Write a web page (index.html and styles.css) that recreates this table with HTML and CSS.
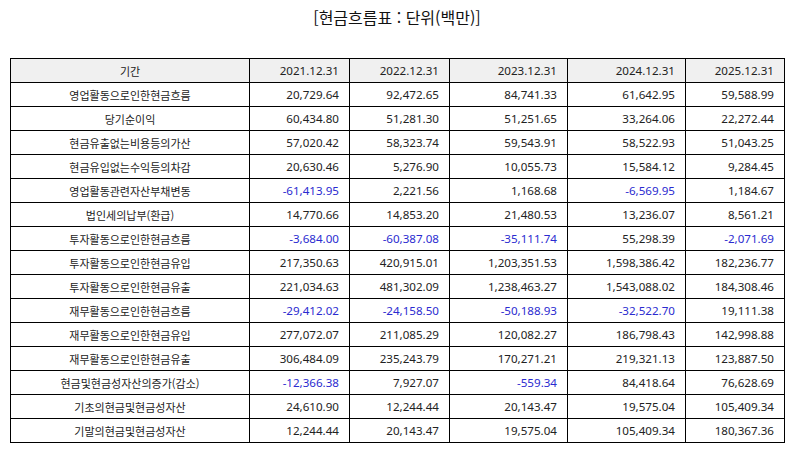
FILE: index.html
```html
<!DOCTYPE html>
<html lang="ko">
<head>
<meta charset="utf-8">
<link rel="stylesheet" href="styles.css">
</head>
<body>
<div class="page">
  <h1 class="title">[현금흐름표 : 단위(백만)]</h1>
  <table class="cf">
    <colgroup>
      <col class="c-label"><col class="c-a"><col class="c-a"><col class="c-b"><col class="c-b"><col class="c-c">
    </colgroup>
    <thead>
      <tr><th class="lbl">기간</th><th>2021.12.31</th><th>2022.12.31</th><th>2023.12.31</th><th>2024.12.31</th><th>2025.12.31</th></tr>
    </thead>
    <tbody>
      <tr><td class="lbl">영업활동으로인한현금흐름</td><td>20,729.64</td><td>92,472.65</td><td>84,741.33</td><td>61,642.95</td><td>59,588.99</td></tr>
      <tr><td class="lbl">당기순이익</td><td>60,434.80</td><td>51,281.30</td><td>51,251.65</td><td>33,264.06</td><td>22,272.44</td></tr>
      <tr><td class="lbl">현금유출없는비용등의가산</td><td>57,020.42</td><td>58,323.74</td><td>59,543.91</td><td>58,522.93</td><td>51,043.25</td></tr>
      <tr><td class="lbl">현금유입없는수익등의차감</td><td>20,630.46</td><td>5,276.90</td><td>10,055.73</td><td>15,584.12</td><td>9,284.45</td></tr>
      <tr><td class="lbl">영업활동관련자산부채변동</td><td class="neg">-61,413.95</td><td>2,221.56</td><td>1,168.68</td><td class="neg">-6,569.95</td><td>1,184.67</td></tr>
      <tr><td class="lbl">법인세의납부(환급)</td><td>14,770.66</td><td>14,853.20</td><td>21,480.53</td><td>13,236.07</td><td>8,561.21</td></tr>
      <tr><td class="lbl">투자활동으로인한현금흐름</td><td class="neg">-3,684.00</td><td class="neg">-60,387.08</td><td class="neg">-35,111.74</td><td>55,298.39</td><td class="neg">-2,071.69</td></tr>
      <tr><td class="lbl">투자활동으로인한현금유입</td><td>217,350.63</td><td>420,915.01</td><td>1,203,351.53</td><td>1,598,386.42</td><td>182,236.77</td></tr>
      <tr><td class="lbl">투자활동으로인한현금유출</td><td>221,034.63</td><td>481,302.09</td><td>1,238,463.27</td><td>1,543,088.02</td><td>184,308.46</td></tr>
      <tr><td class="lbl">재무활동으로인한현금흐름</td><td class="neg">-29,412.02</td><td class="neg">-24,158.50</td><td class="neg">-50,188.93</td><td class="neg">-32,522.70</td><td>19,111.38</td></tr>
      <tr><td class="lbl">재무활동으로인한현금유입</td><td>277,072.07</td><td>211,085.29</td><td>120,082.27</td><td>186,798.43</td><td>142,998.88</td></tr>
      <tr><td class="lbl">재무활동으로인한현금유출</td><td>306,484.09</td><td>235,243.79</td><td>170,271.21</td><td>219,321.13</td><td>123,887.50</td></tr>
      <tr><td class="lbl">현금및현금성자산의증가(감소)</td><td class="neg">-12,366.38</td><td>7,927.07</td><td class="neg">-559.34</td><td>84,418.64</td><td>76,628.69</td></tr>
      <tr><td class="lbl">기초의현금및현금성자산</td><td>24,610.90</td><td>12,244.44</td><td>20,143.47</td><td>19,575.04</td><td>105,409.34</td></tr>
      <tr><td class="lbl">기말의현금및현금성자산</td><td>12,244.44</td><td>20,143.47</td><td>19,575.04</td><td>105,409.34</td><td>180,367.36</td></tr>
    </tbody>
  </table>
</div>
</body>
</html>
```

FILE: styles.css
```css
html, body {
  margin: 0;
  padding: 0;
  background: #ffffff;
}
body {
  font-family: "Noto Sans CJK KR", "Noto Sans", sans-serif;
  color: #222222;
}
.page {
  width: 794px;
  padding: 0 10px;
  box-sizing: border-box;
}
.title {
  margin: 0;
  padding-top: 5px;
  height: 58px;
  box-sizing: border-box;
  text-align: center;
  font-size: 16px;
  font-weight: 400;
  line-height: 24px;
  color: #111111;
}
.cf {
  width: 774px;
  border-collapse: collapse;
  table-layout: fixed;
  font-family: "Noto Sans", "Noto Sans CJK KR", sans-serif;
  font-size: 11.6px;
}
.c-label { width: 239px; }
.c-a { width: 100px; }
.c-b { width: 118px; }
.c-c { width: 99px; }
.cf th, .cf td {
  border: 1px solid #000000;
  height: 24px;
  padding: 0 10px;
  text-align: right;
  font-weight: 400;
  white-space: nowrap;
  box-sizing: border-box;
  line-height: 14px;
}
.cf th {
  background: #f0f0f0;
}
.cf .lbl {
  text-align: center;
  font-family: "Noto Sans CJK KR", sans-serif;
  font-size: 11px;
}
.cf .neg {
  color: #2b2bd0;
}
```
